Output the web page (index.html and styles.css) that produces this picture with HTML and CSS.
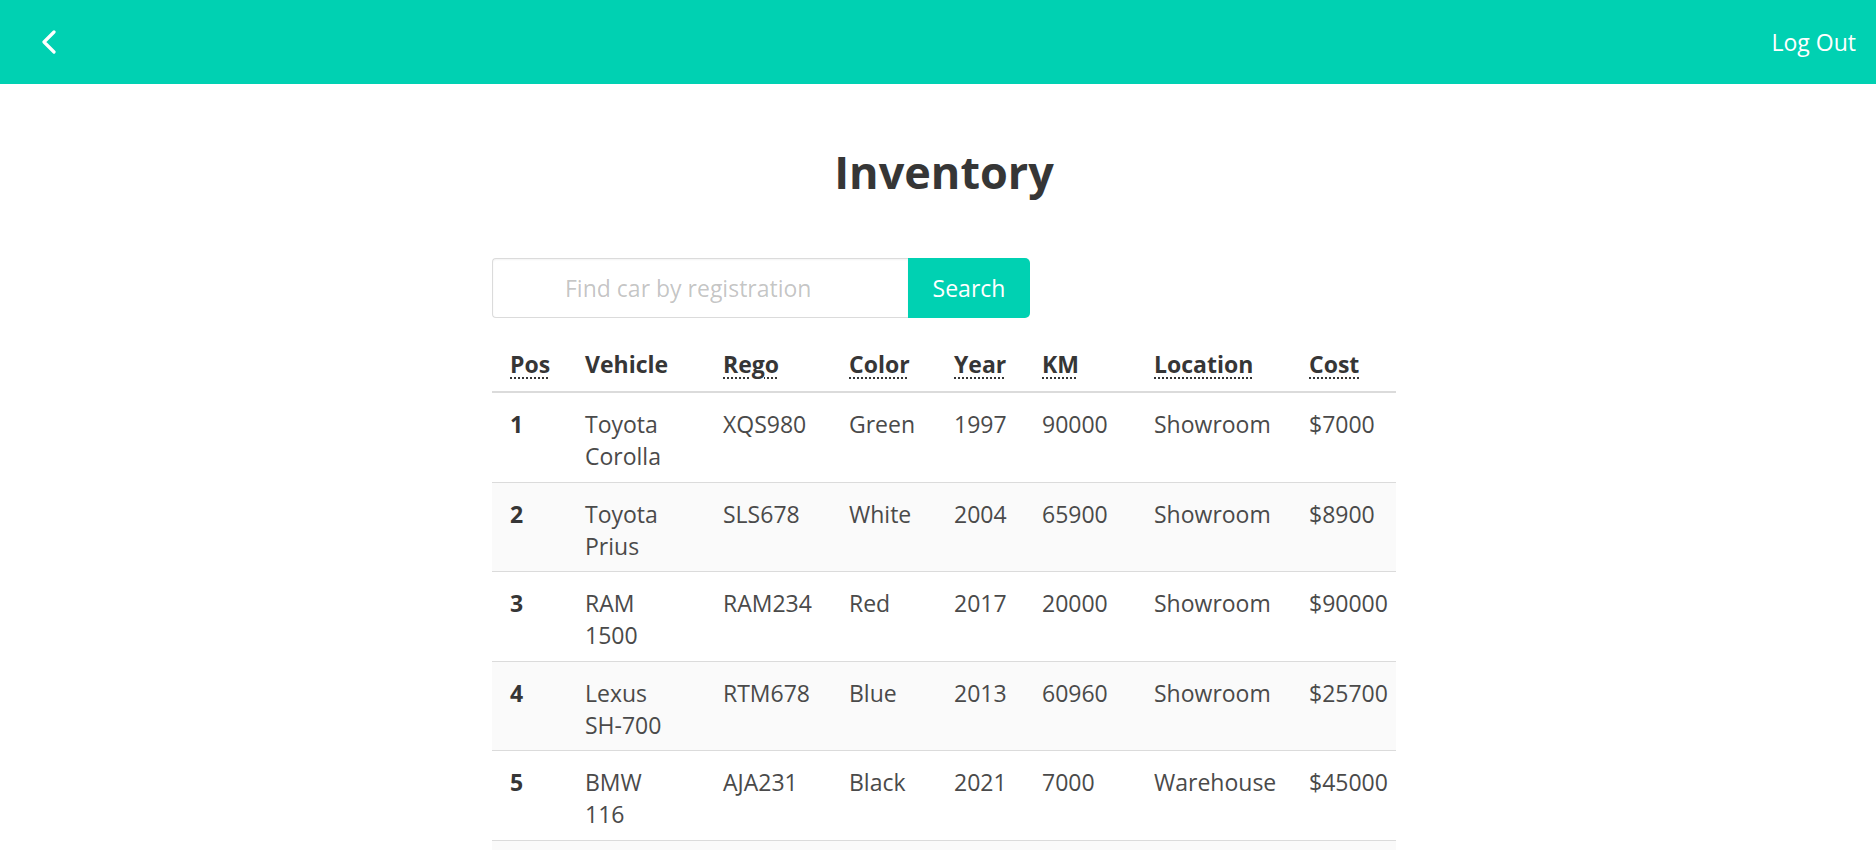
FILE: index.html
```html
<!DOCTYPE html>
<html lang="en">
<head>
<meta charset="utf-8">
<title>Inventory</title>
<link rel="stylesheet" href="styles.css">
</head>
<body>
<header class="topbar">
  <a class="back" href="#" aria-label="Back">
    <svg width="16" height="24" viewBox="0 0 16 24"><polyline points="13,2 3,12 13,22" fill="none" stroke="#fff" stroke-width="3.2" stroke-linecap="round" stroke-linejoin="round"/></svg>
  </a>
  <a class="logout" href="#">Log Out</a>
</header>
<main class="page">
  <section class="content">
    <h1 class="title">Inventory</h1>
    <form class="search">
      <input class="search-input" type="text" placeholder="Find car by registration">
      <button class="search-btn" type="button">Search</button>
    </form>
    <table class="inventory">
      <colgroup>
        <col class="c-pos"><col class="c-veh"><col class="c-rego"><col class="c-color"><col class="c-year"><col class="c-km"><col class="c-loc"><col class="c-cost">
      </colgroup>
      <thead>
        <tr>
          <th><abbr title="Position">Pos</abbr></th>
          <th>Vehicle</th>
          <th><abbr title="Registration">Rego</abbr></th>
          <th><abbr title="Colour">Color</abbr></th>
          <th><abbr title="Model year">Year</abbr></th>
          <th><abbr title="Kilometres">KM</abbr></th>
          <th><abbr title="Location">Location</abbr></th>
          <th><abbr title="Cost">Cost</abbr></th>
        </tr>
      </thead>
      <tbody>
        <tr><th>1</th><td><span class="make">Toyota</span><span class="model">Corolla</span></td><td>XQS980</td><td>Green</td><td>1997</td><td>90000</td><td>Showroom</td><td>$7000</td></tr>
        <tr><th>2</th><td><span class="make">Toyota</span><span class="model">Prius</span></td><td>SLS678</td><td>White</td><td>2004</td><td>65900</td><td>Showroom</td><td>$8900</td></tr>
        <tr><th>3</th><td><span class="make">RAM</span><span class="model">1500</span></td><td>RAM234</td><td>Red</td><td>2017</td><td>20000</td><td>Showroom</td><td>$90000</td></tr>
        <tr><th>4</th><td><span class="make">Lexus</span><span class="model">SH-700</span></td><td>RTM678</td><td>Blue</td><td>2013</td><td>60960</td><td>Showroom</td><td>$25700</td></tr>
        <tr><th>5</th><td><span class="make">BMW</span><span class="model">116</span></td><td>AJA231</td><td>Black</td><td>2021</td><td>7000</td><td>Warehouse</td><td>$45000</td></tr>
        <tr class="filler"><th></th><td></td><td></td><td></td><td></td><td></td><td></td><td></td></tr>
      </tbody>
    </table>
  </section>
</main>
</body>
</html>
```
FILE: styles.css
```css
html {
  overflow: hidden;
}
body {
  margin: 0;
  font-family: "Open Sans", "Noto Sans", "Liberation Sans", sans-serif;
  font-size: 23px;
  line-height: 32px;
  color: #4a4a4a;
  background: #fff;
}
.topbar {
  height: 84px;
  background: #00d1b2;
  display: flex;
  align-items: center;
  justify-content: space-between;
  padding: 0 20px 0 41px;
}
.back {
  display: flex;
  align-items: center;
  height: 24px;
}
.logout {
  color: #fff;
  text-decoration: none;
  font-size: 23px;
  line-height: 32px;
}
.page {
  padding-left: 12px;
}
.content {
  width: 904px;
  margin: 0 auto;
  display: flex;
  flex-direction: column;
}
.title {
  margin: 61px 0 0;
  text-align: center;
  font-size: 45px;
  line-height: 54px;
  font-weight: 700;
  color: #363636;
}
.search {
  display: flex;
  margin-top: 59px;
}
.search-input {
  width: 416px;
  height: 60px;
  box-sizing: border-box;
  border: 1px solid #dbdbdb;
  border-right: none;
  border-radius: 4px 0 0 4px;
  box-shadow: inset 0 1px 2px rgba(10, 10, 10, 0.05);
  padding: 0 12px 0 72px;
  font: inherit;
  color: #363636;
  outline: none;
}
.search-input::placeholder {
  color: rgba(54, 54, 54, 0.3);
}
.search-btn {
  width: 122px;
  height: 60px;
  border: none;
  border-radius: 0 5px 5px 0;
  background: #00d1b2;
  color: #fff;
  font: inherit;
  padding: 0;
  cursor: pointer;
}
.inventory {
  margin-top: 17px;
  width: 904px;
  table-layout: fixed;
  border-collapse: collapse;
}
.c-pos { width: 75px; }
.c-veh { width: 138px; }
.c-rego { width: 126px; }
.c-color { width: 105px; }
.c-year { width: 88px; }
.c-km { width: 112px; }
.c-loc { width: 155px; }
.c-cost { width: 105px; }
.inventory th,
.inventory td {
  text-align: left;
  vertical-align: top;
  padding: 15px 0 9.5px 18px;
  border-bottom: 1px solid #dbdbdb;
  white-space: nowrap;
}
.inventory thead th {
  padding: 13px 0 11px 18px;
  border-bottom: 2px solid #dbdbdb;
  color: #363636;
  font-weight: 700;
}
.inventory tbody th {
  color: #363636;
  font-weight: 700;
}
.inventory tbody tr:nth-child(even) {
  background: #fafafa;
}
.inventory .filler th,
.inventory .filler td {
  height: 64px;
}
.inventory abbr {
  text-decoration: underline dotted;
  text-underline-offset: 4px;
  text-decoration-thickness: 2px;
}
.make,
.model {
  display: block;
}
```
